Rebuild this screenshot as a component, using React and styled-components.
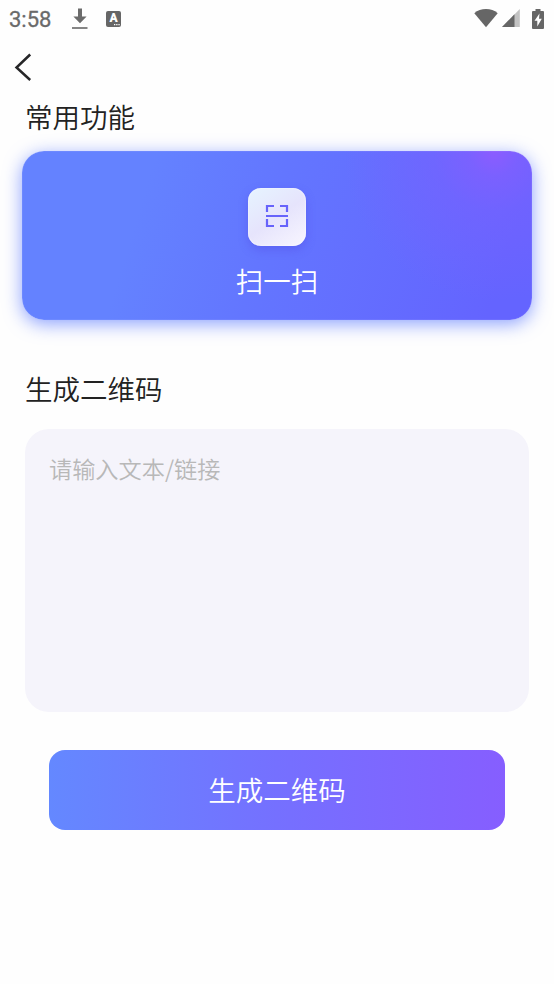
import React from 'react';
import styled, { createGlobalStyle } from 'styled-components';

const App = () => {
	return (
		<Screen>
			<GlobalStyle />

			<StatusBar>
				<Time>3:58</Time>
				<DownloadIcon width="16" height="22" viewBox="0 0 16 22">
					<path d="M6 0.5h4v8h4.6L8 15.2 1.4 8.500H6z" fill="#6b6b6b" />
					<rect x="0" y="19" width="15.500" height="2" fill="#858585" />
				</DownloadIcon>
				<LanguageBadge>
					A
					<Dots width="6" height="2" viewBox="0 0 6 2">
						<path d="M0 0h1.300v1.200H0zM2.200 0h1.300v1.200H2.200zM4.400 0h1.300v1.200H4.400z" fill="#fff" />
					</Dots>
				</LanguageBadge>

				<StatusRight>
					<svg width="24" height="20" viewBox="0 0 24 20">
						<path d="M0.300 4.200C3.500 1.300 7.500 0 12 0s8.500 1.300 11.700 4.200L12 18.300z" fill="#666" />
					</svg>
					<SignalIcon width="18" height="19" viewBox="0 0 18 19">
						<path d="M17.800 0v18H0z" fill="#c2c2c2" />
						<path d="M12.500 5.300v12.700H0z" fill="#666" />
					</SignalIcon>
					<BatteryIcon width="12" height="20" viewBox="0 0 12 20">
						<path d="M3.500 0h5v2H11a1 1 0 0 1 1 1v16a1 1 0 0 1-1 1H1a1 1 0 0 1-1-1V3a1 1 0 0 1 1-1h2.500z" fill="#666" />
						<path d="M7.500 4.500L2.500 11.700h2.800v5.800l4.500-7.700H7z" fill="#fff" />
					</BatteryIcon>
				</StatusRight>
			</StatusBar>

			<TopBar>
				<BackButton aria-label="返回">
					<svg width="18" height="28" viewBox="0 0 18 28">
						<path d="M16.200 1.500L2.500 14.500l13.700 12.500" fill="none" stroke="#262628" strokeWidth="2.500" />
					</svg>
				</BackButton>
			</TopBar>

			<Content>
				<Title>常用功能</Title>
				<ScanCard>
					<ScanTile>
						<svg width="24" height="24" viewBox="0 0 24 24" fill="none" stroke="#6763fb" strokeWidth="2.200">
							<path d="M2 8V2h7M15 2h7v6M2 15v7h7M15 22h7v-7M1 12h22" />
						</svg>
					</ScanTile>
					<ScanLabel>扫一扫</ScanLabel>
				</ScanCard>

				<Title $top={48}>生成二维码</Title>
				<TextInput placeholder="请输入文本/链接" />
				<GenerateButton>生成二维码</GenerateButton>
			</Content>
		</Screen>
	);
}

export default App;

const GlobalStyle = createGlobalStyle`
	* {
		box-sizing: border-box;
	}

	body {
		margin: 0;
		background: #fefefe;
		font-family: "Noto Sans CJK SC", sans-serif;
		font-weight: 350;
	}

	button, textarea {
		font-family: inherit;
		font-weight: inherit;
		border: none;
		padding: 0;
	}
`

const Screen = styled.div`
	display: flex;
	flex-direction: column;
	width: 100%;
	max-width: 554px;
	height: 984px;
	overflow: hidden;
`

const StatusBar = styled.div`
	display: flex;
	align-items: center;
	height: 38px;
	padding: 0 10px 0 9px;
`

const Time = styled.span`
	width: 63px;
	font-family: Roboto, sans-serif;
	font-size: 22px;
	font-weight: 400;
	-webkit-text-stroke: 0.300px #6a6a6a;
	line-height: 38px;
	padding-top: 1px;
	color: #6a6a6a;
`

const DownloadIcon = styled.svg`
	margin-right: 18px;
`

const LanguageBadge = styled.span`
	position: relative;
	width: 15px;
	height: 16px;
	border-radius: 2px;
	background: #666;
	color: #fff;
	font-family: Roboto, sans-serif;
	font-size: 12px;
	font-weight: 900;
	line-height: 15px;
	text-align: center;
`

const Dots = styled.svg`
	position: absolute;
	right: 1px;
	bottom: 1px;
`

const StatusRight = styled.div`
	display: flex;
	align-items: center;
	margin-left: auto;
	padding-bottom: 1px;
`

const SignalIcon = styled.svg`
	margin-left: 4px;
`

const BatteryIcon = styled.svg`
	margin-left: 12px;
`

const TopBar = styled.div`
	display: flex;
	align-items: center;
	height: 58px;
	padding-left: 14px;
`

const BackButton = styled.button`
	display: flex;
	background: none;
`

const Content = styled.div`
	display: flex;
	flex-direction: column;
	padding: 0 25px;
`

const Title = styled.h2`
	margin: ${props => props.$top || 0}px 0 0;
	font-size: 27.5px;
	font-weight: inherit;
	line-height: 40px;
	color: #222;
`

const ScanCard = styled.div`
	display: flex;
	flex-direction: column;
	align-items: center;
	height: 169px;
	margin: 15px -3px 0;
	padding-top: 37px;
	border-radius: 22px;
	background:
		radial-gradient(circle at 472px 0, #8c5cff 0, rgba(132, 94, 255, 0.700) 25px, rgba(122, 97, 255, 0.500) 60px, rgba(104, 100, 255, 0) 150px),
		linear-gradient(107deg, #6482ff 24%, #6376ff 48%, #6464ff 92%);
	box-shadow: 0 4px 18px rgba(80, 112, 255, 0.650), inset 0 0 1px rgba(255, 255, 255, 0.600);
`

const ScanTile = styled.div`
	display: flex;
	align-items: center;
	justify-content: center;
	width: 58px;
	height: 57.5px;
	padding-bottom: 1.5px;
	border-radius: 13px;
	background: linear-gradient(145deg, #e6f4ff 0%, #e6e4fc 50%, #f8f6ff 100%);
	box-shadow: 0 4px 10px rgba(80, 70, 220, 0.350), inset 0 0 2px #fff;
`

const ScanLabel = styled.span`
	margin-top: 14px;
	font-size: 27.5px;
	line-height: 40px;
	color: #fff;
`

const TextInput = styled.textarea`
	display: block;
	height: 283px;
	margin-top: 21px;
	padding: 23px 24px;
	border-radius: 24px;
	background: #f5f4fb;
	font-size: 23.200px;
	line-height: 32px;
	color: #222;
	resize: none;
	outline: none;

	&::placeholder {
		color: #b8b8b8;
	}
`

const GenerateButton = styled.button`
	height: 80px;
	margin: 38px 24px 0;
	padding-bottom: 2px;
	border-radius: 16px;
	background: linear-gradient(90deg, #6488ff, #7570ff 50%, #865eff);
	font-size: 27.5px;
	line-height: 40px;
	color: #fff;
`
